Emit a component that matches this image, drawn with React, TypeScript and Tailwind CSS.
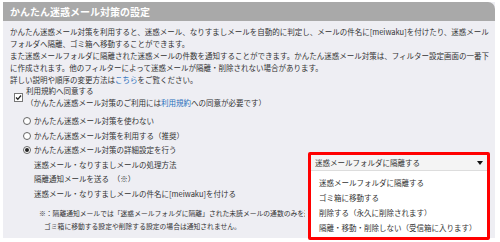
import React from "react";

export default function App() {
  const font = { fontFamily: '"Noto Sans CJK JP", "Noto Sans", sans-serif' };
  return (
    <div className="w-[500px] h-[242px] bg-white relative overflow-hidden" style={font}>
      <div className="ml-[3px] mt-[2px] w-[492px] h-[236px] bg-[#eeeef3] text-[#333] text-[7.5px]">
        <div className="h-[19px] bg-[#a9a9a9] rounded-tr-[7px] flex items-center pl-[7px] text-white text-[10px] font-bold leading-none">
          かんたん迷惑メール対策の設定
        </div>
        <div className="pl-[7px] pt-[5px] leading-[12px]">
          <p>かんたん迷惑メール対策を利用すると、迷惑メール、なりすましメールを自動的に判定し、メールの件名に[meiwaku]を付けたり、迷惑メール</p>
          <p>フォルダへ隔離、ゴミ箱へ移動することができます。</p>
          <p>また迷惑メールフォルダに隔離された迷惑メールの件数を通知することができます。かんたん迷惑メール対策は、フィルター設定画面の一番下</p>
          <p>に作成されます。他のフィルターによって迷惑メールが隔離・削除されない場合があります。</p>
          <p>詳しい説明や順序の変更方法は<span className="text-[#2a6ebb]">こちら</span>をご覧ください。</p>
        </div>
        <div className="flex items-center pl-[11px] mt-[-1px]">
          <div className="w-[9px] h-[9px] border border-[#777] bg-white flex items-center justify-center">
            <svg width="7" height="7" viewBox="0 0 7 7">
              <path d="M1 3.5 L2.8 5.3 L6 1.5" stroke="#222" strokeWidth="1.3" fill="none" />
            </svg>
          </div>
          <div className="ml-[3px] leading-[12px]">
            <p>利用規約へ同意する</p>
            <p>（かんたん迷惑メール対策のご利用には<span className="text-[#2a6ebb]">利用規約</span>への同意が必要です）</p>
          </div>
        </div>
        <div className="pl-[20px] mt-[5px] leading-[14.5px]">
          <div className="flex items-center">
            <span className="w-[8px] h-[8px] rounded-full border border-[#666] bg-white mr-[3px]" />
            かんたん迷惑メール対策を使わない
          </div>
          <div className="flex items-center">
            <span className="w-[8px] h-[8px] rounded-full border border-[#666] bg-white mr-[3px]" />
            かんたん迷惑メール対策を利用する（推奨）
          </div>
          <div className="flex items-center">
            <span className="w-[8px] h-[8px] rounded-full border border-[#666] bg-white mr-[3px] flex items-center justify-center">
              <span className="w-[4px] h-[4px] rounded-full bg-[#222]" />
            </span>
            かんたん迷惑メール対策の詳細設定を行う
          </div>
          <div className="pl-[11px]">
            <p>迷惑メール・なりすましメールの処理方法</p>
            <p>隔離通知メールを送る　（※）</p>
            <p>迷惑メール・なりすましメールの件名に[meiwaku]を付ける</p>
          </div>
        </div>
        <div className="ml-[36px] mt-[6px] w-[266px] overflow-hidden whitespace-nowrap leading-[13px] text-[6.8px]">
          <p>※：隔離通知メールでは「迷惑メールフォルダに隔離」された未読メールの通数のみを通知します。</p>
          <p className="pl-[5px]">ゴミ箱に移動する設定や削除する設定の場合は通知されません。</p>
        </div>
      </div>
      <div className="absolute left-[308px] top-[152px] w-[182px] h-[88px] border-[3px] border-[#ff0000] rounded-[2px] bg-white text-[7.5px] text-[#333]">
        <div className="h-[16px] bg-[#f4f4f4] border-b border-[#ddd] flex items-center justify-between pl-[4px] pr-[4px]">
          <span>迷惑メールフォルダに隔離する</span>
          <svg width="6" height="4" viewBox="0 0 6 4">
            <path d="M0 0 L6 0 L3 4 Z" fill="#111" />
          </svg>
        </div>
        <div className="pl-[8px] pt-[4px] leading-[15px]">
          <p>迷惑メールフォルダに隔離する</p>
          <p>ゴミ箱に移動する</p>
          <p>削除する（永久に削除されます）</p>
          <p>隔離・移動・削除しない（受信箱に入ります）</p>
        </div>
      </div>
    </div>
  );
}
